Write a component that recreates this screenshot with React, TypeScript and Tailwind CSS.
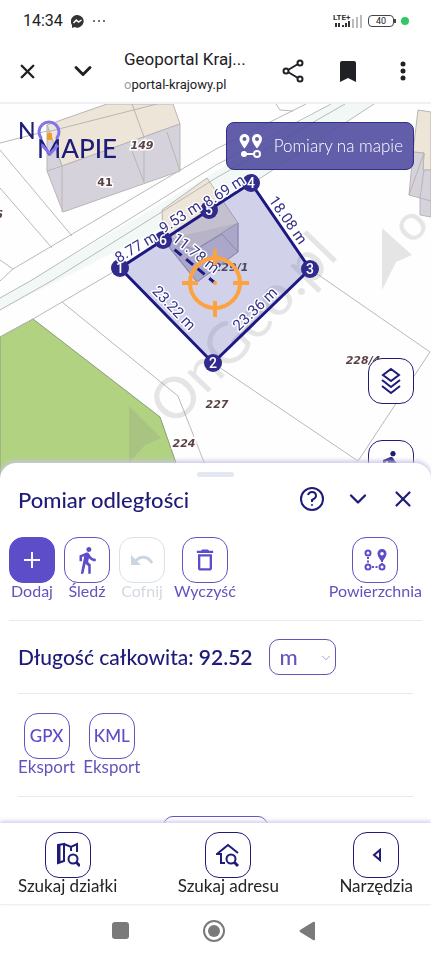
import type { ReactNode } from 'react';
import { ChevronDown, X } from 'lucide-react';
import { MdDirectionsWalk, MdOutlineDelete } from 'react-icons/md';

const parcelPoints = [
    { n: 6, x: 163, y: 240 },
    { n: 5, x: 209, y: 210 },
    { n: 4, x: 251, y: 183 },
    { n: 3, x: 310, y: 269 },
    { n: 2, x: 213, y: 363 },
    { n: 1, x: 120, y: 268 },
];

const distances = [
    { text: '8.77 m', x: 136, y: 247, angle: -31 },
    { text: '9.53 m', x: 180, y: 217, angle: -33 },
    { text: '8.69 m', x: 224, y: 191, angle: -33 },
    { text: '18.08 m', x: 288, y: 220, angle: 55 },
    { text: '23.36 m', x: 255, y: 309, angle: -44 },
    { text: '23.22 m', x: 174, y: 308, angle: 46 },
    { text: '11.78 m', x: 196, y: 253, angle: 38 },
];

const parcelNumbers = [
    { text: '149', x: 142, y: 149, italic: true },
    { text: '41', x: 105, y: 186, italic: false },
    { text: '227', x: 217, y: 408, italic: true },
    { text: '224', x: 184, y: 447, italic: true },
    { text: '228/4', x: 363, y: 364, italic: true },
    { text: '6', x: -1, y: 218, italic: true },
];

function MapCanvas() {
    return (
        <svg viewBox="0 104 431 376" preserveAspectRatio="xMidYMin slice" className="absolute inset-0 h-full w-full" role="img" aria-label="Mapa działek">
            <rect y="104" width="431" height="376" fill="#fefefe" />
            <path d="M0 298L331 104H374L259 179L0 310Z" fill="#f2f8f6" />
            <path d="M0 337L33 319L160 417L182 480H0Z" fill="#b1d281" stroke="#8c9c78" />

            {/* buildings */}
            <g stroke="#b9b5b5">
                <path d="M47 125L107 104H173L180 124L62 166Z" fill="#ede5d8" />
                <path d="M47 125L62 166L180 124V171L63 212L47 171Z" fill="#d6d2dc" />
                <path d="M132 104L144 137V182L132 151M167 132L180 171M47 171L62 166V212" fill="none" />
                <path d="M47 132L157 104" fill="none" />
                <path d="M418 110L431 112V170H423L424 153L413 152Z" fill="#ede5d8" />
                <path d="M413 152L424 153L423 170H431V217L420 215V198L409 195Z" fill="#d6d2dc" />
                <path d="M409 195L424 153M420 198L424 170M420 198L431 201" fill="none" />
                <path d="M162 210L207 178L238 223L195 250L163 238Z" fill="#ede5d8" />
                <path d="M163 238L195 250L238 223V252L197 282Z" fill="#d6d2dc" />
            </g>

            {/* parcel borders */}
            <g fill="none" stroke="#b9b9b7" strokeWidth="1">
                <path d="M0 143L47 131" />
                <path d="M0 150L72 236M0 188L52 248M0 260L13 269L0 281" />
                <path d="M13 269L216 149L306 104M276 104L280 110L293 111" />
                <path d="M0 298L32 280L216 165L331 104" />
                <path d="M0 310L53 280L216 178L345 104" />
                <path d="M0 337L33 319L120 268M259 179L374 104" />
                <path d="M62 302L178 396L211 480" />
                <path d="M310 269L430 352L358 461L213 363" />
            </g>

            {/* watermark */}
            <g fill="#8d8d8d" opacity="0.22">
                <text transform="translate(174 428) rotate(-46)" fontSize="57" className="font-['Lato',sans-serif]">OnGeo.pl</text>
                <path d="M129 406L161 438L145 445L129 463Z" />
                <path d="M382 228L412 255L396 262L382 290Z" />
                <text transform="translate(412 246) rotate(-46)" fontSize="50" className="font-['Lato',sans-serif]">o</text>
            </g>

            {/* measured area */}
            <polygon points={parcelPoints.map(p => `${p.x},${p.y}`).join(' ')} fill="#6b69b8" fillOpacity="0.3" stroke="#1d1983" strokeWidth="3" />
            <path d="M163 240L197 282L238 252V223M222 234L238 252M195 250L222 234" fill="#4b478f" fillOpacity="0.1" stroke="#8a87ad" />
            <path d="M163 240L215 283" stroke="#1d1983" strokeWidth="3" strokeDasharray="9 6" />

            <g fontWeight="700" fontSize="11" fill="#5a4244" stroke="#fff" strokeWidth="3" paintOrder="stroke" textAnchor="middle" className="font-['DejaVu_Sans',sans-serif]">
                {parcelNumbers.map(p => (
                    <text key={p.text} x={p.x} y={p.y} fontStyle={p.italic ? 'italic' : 'normal'}>{p.text}</text>
                ))}
            </g>
            <text x="231" y="271" fontSize="11" fontWeight="700" fontStyle="italic" fill="#4c4768" textAnchor="middle" className="font-['DejaVu_Sans',sans-serif]">229/1</text>

            {parcelPoints.map(p => (
                <g key={p.n}>
                    <circle cx={p.x} cy={p.y} r="9" fill="#2f2a8c" />
                    <text x={p.x} y={p.y + 5} fontSize="14" fontWeight="500" fill="#fff" textAnchor="middle" className="font-['Roboto',sans-serif]">{p.n}</text>
                </g>
            ))}

            <g fontSize="15" fill="#35318a" stroke="#fff" strokeWidth="3" strokeLinejoin="round" paintOrder="stroke" textAnchor="middle" className="font-['Roboto',sans-serif]">
                {distances.map(d => (
                    <text key={d.text} transform={`translate(${d.x} ${d.y}) rotate(${d.angle})`} y="5">{d.text}</text>
                ))}
            </g>

            {/* crosshair */}
            <g fill="none" stroke="#fda23c" strokeWidth="4">
                <circle cx="215" cy="283" r="25" />
                <path d="M182 283h16M233 283h16M215 249v16M215 301v16" />
                <circle cx="215" cy="283" r="2" fill="#fda23c" stroke="none" />
            </g>
        </svg>
    );
}

function Logo() {
    return (
        <svg width="108" height="46" viewBox="0 0 108 46" role="img" aria-label="Na mapie" className="absolute left-[17px] top-[14px]">
            <g fontWeight="500" fill="#1f1b78" className="font-['Lato',sans-serif]">
                <text x="1" y="21" fontSize="23">N</text>
                <text x="20" y="40" fontSize="26">MAPIE</text>
            </g>
            <path d="M24 20A10 10 0 1 1 40 20" fill="none" stroke="#8273e8" strokeWidth="3" strokeLinecap="round" />
            <path d="M25 27L33 36L41 27" fill="none" stroke="#8273e8" strokeWidth="3" />
            <rect x="30" y="15" width="5" height="7" rx="1" fill="#f59a23" />
        </svg>
    );
}

function PinsIcon() {
    return (
        <svg width="26" height="26" viewBox="0 0 26 26" className="shrink-0">
            <path fillRule="evenodd" fill="currentColor" d="M6.500 1a5 5 0 0 0-5 5c0 3.500 5 9.500 5 9.500s5-6 5-9.500a5 5 0 0 0-5-5zm0 3a2 2 0 1 1 0 4 2 2 0 0 1 0-4zM19 1a5 5 0 0 0-5 5c0 3.500 5 9.500 5 9.500s5-6 5-9.500a5 5 0 0 0-5-5zm0 3a2 2 0 1 1 0 4 2 2 0 0 1 0-4z" />
            <path d="M6 21H16" stroke="currentColor" strokeWidth="2" />
            <circle cx="6" cy="21" r="3" fill="currentColor" />
            <circle cx="19" cy="21" r="3" fill="none" stroke="currentColor" strokeWidth="2" />
        </svg>
    );
}

function LayersIcon() {
    return (
        <svg width="24" height="28" viewBox="0 0 24 28" fill="none" stroke="currentColor" strokeWidth="2">
            <path d="M12 2L20 8L12 14L4 8Z" />
            <path d="M3 13L12 20L21 13M3 19L12 26L21 19" />
        </svg>
    );
}

function AreaIcon() {
    return (
        <svg width="24" height="24" viewBox="0 0 24 24" fill="none" stroke="currentColor" strokeWidth="2">
            <circle cx="5" cy="5" r="2.500" />
            <circle cx="5" cy="19" r="2.500" />
            <circle cx="19" cy="19" r="2.500" />
            <path d="M5 9V16M9 19H16" strokeDasharray="2 1.500" />
            <path fillRule="evenodd" fill="currentColor" stroke="none" d="M19 1a4.500 4.500 0 0 0-4.500 4.500C14.500 9 19 14 19 14s4.500-5 4.500-8.500A4.500 4.500 0 0 0 19 1zm0 3a1.800 1.800 0 1 1 0 3.600A1.800 1.800 0 0 1 19 4z" />
            <path d="M19 13V16" strokeDasharray="1 1" />
        </svg>
    );
}

function UndoIcon() {
    return (
        <svg width="24" height="24" viewBox="0 0 24 24" fill="none" stroke="currentColor">
            <path d="M5 14C10 7 18 8 22 15" strokeWidth="3" />
            <path d="M1 7V17H11Z" fill="currentColor" stroke="none" />
        </svg>
    );
}

function MapSearchIcon() {
    return (
        <svg width="24" height="26" viewBox="0 0 24 26" fill="none" stroke="currentColor" strokeWidth="2">
            <path d="M2 3L8 2V19L2 21ZM8 2L15 5L21 2V10M15 5V9" />
            <path d="M3 3V20" strokeWidth="3" />
            <circle cx="17" cy="17" r="4.500" />
            <path d="M20 20L24 24" strokeWidth="3" />
        </svg>
    );
}

function HomeSearchIcon() {
    return (
        <svg width="24" height="26" viewBox="0 0 24 26" fill="none" stroke="currentColor" strokeWidth="2">
            <path d="M9 21H5V12H1L12 3L22 11" />
            <circle cx="15" cy="17" r="4.500" />
            <path d="M18 20L22 24" strokeWidth="3" />
        </svg>
    );
}

type ToolProps = { label: string; children: ReactNode; tone?: 'solid' | 'outline' | 'muted' | 'navy'; large?: boolean };

const textTones = { solid: 'text-[#6254bd]', outline: 'text-[#6254bd]', muted: 'text-[#d3d9e0]', navy: 'text-[#242424]' };
const boxTones = {
    solid: 'border-[#5d4dc9] bg-[#5d4dc9] text-white',
    outline: 'border-[#6254bd] text-[#5d4dc9]',
    muted: 'border-[#dbe1e6] text-[#ccd6e2]',
    navy: 'border-[#1f1b78] text-[#1f1b78]',
};

function Tool({ label, children, tone = 'outline', large }: ToolProps) {
    return (
        <button type="button" disabled={tone === 'muted'} className={`flex flex-col items-center ${large ? 'text-[17px]' : 'text-base'} ${textTones[tone]}`}>
            <span className={`flex h-[46px] w-[46px] items-center justify-center rounded-[14px] border ${boxTones[tone]}`}>{children}</span>
            <span className="leading-4">{label}</span>
        </button>
    );
}

function PhoneHeader() {
    return (
        <header className="shrink-0 border-b-2 border-[#eef0f2] font-['Roboto',sans-serif] text-[#202124]">
            <div className="flex h-[42px] items-center pl-[23px] pr-[22px]">
                <span className="text-base">14:34</span>
                <svg width="13" height="13" viewBox="0 0 13 13" className="ml-2">
                    <path d="M6.500 0a6.300 6.300 0 1 1-3 11.900L1 13V10A6.400 6.400 0 0 1 6.500 0z" fill="#333" />
                    <path d="M2.500 8L5.300 5L7.500 7L10.500 5" fill="none" stroke="#fff" strokeWidth="1.500" />
                </svg>
                <svg width="14" height="4" viewBox="0 0 14 4" fill="#444" className="ml-2">
                    <circle cx="2" cy="2" r="1" /><circle cx="7" cy="2" r="1" /><circle cx="12" cy="2" r="1" />
                </svg>
                <svg width="31" height="16" viewBox="0 0 31 16" className="ml-auto">
                    <text x="0" y="7" fontSize="8" fontWeight="700" fill="#333">LTE+</text>
                    <path d="M3 10v4M6 10v4" stroke="#333" strokeWidth="2" />
                    <path d="M10 12v2M13 10v4M16 8v6" stroke="#333" strokeWidth="2" />
                    <path d="M20 6v9M24 4v11M28 2v13" stroke="#bbb" strokeWidth="2" />
                </svg>
                <span className="ml-1 flex h-3 w-[26px] items-center justify-center rounded border border-[#444] text-[9px] leading-3">40</span>
                <span className="h-1 w-[2px] bg-[#444]" />
                <span className="ml-[5px] h-2 w-2 rounded-full bg-[#2fc864]" />
            </div>
            <div className="flex h-[60px] items-center pb-0.5 pl-4 pr-[23px]">
                <button type="button" aria-label="Zamknij kartę"><X size={23} strokeWidth={2.5} /></button>
                <button type="button" aria-label="Zwiń" className="ml-[30px]"><ChevronDown size={28} strokeWidth={2.5} /></button>
                <div className="ml-[27px] min-w-0 flex-1">
                    <p className="truncate text-[17px] leading-6">Geoportal Kraj...</p>
                    <p className="truncate pt-1 text-[13px] leading-5"><span className="text-gray-400">o</span>portal-krajowy.pl</p>
                </div>
                <div className="flex shrink-0 items-center">
                    <button type="button" aria-label="Udostępnij">
                        <svg width="22" height="24" viewBox="0 0 22 24" fill="none" stroke="currentColor" strokeWidth="2">
                            <path d="M6 11L16 5M6 13L16 19" />
                            <circle cx="4" cy="12" r="2.500" /><circle cx="18" cy="4" r="2.500" /><circle cx="18" cy="20" r="2.500" />
                        </svg>
                    </button>
                    <button type="button" aria-label="Zakładka" className="ml-9">
                        <svg width="16" height="21" viewBox="0 0 16 21" fill="currentColor"><path d="M2 0H14Q16 0 16 2V21L8 17L0 21V2Q0 0 2 0Z" /></svg>
                    </button>
                    <button type="button" aria-label="Więcej" className="ml-[42px]">
                        <svg width="10" height="20" viewBox="0 0 10 20" fill="currentColor">
                            <circle cx="5" cy="3" r="2.500" /><circle cx="5" cy="10" r="2.500" /><circle cx="5" cy="17" r="2.500" />
                        </svg>
                    </button>
                </div>
            </div>
        </header>
    );
}

export default function App() {
    return (
        <div className="flex h-screen flex-col overflow-hidden bg-white font-['Lato','Open_Sans',sans-serif]">
            <PhoneHeader />

            <main className="flex min-h-0 flex-1 flex-col">
                <section className="relative -mb-4 min-h-0 flex-1 overflow-hidden">
                    <MapCanvas />
                    <Logo />
                    <button type="button" className="absolute right-[17px] top-[18px] flex h-12 items-center gap-[10px] rounded-lg border border-[#332e8a] bg-[#514da0]/90 pl-[11px] pr-[10px] text-[17px] font-light text-white">
                        <PinsIcon />
                        Pomiary na mapie
                    </button>
                    <button type="button" aria-label="Warstwy" className="absolute right-[17px] top-[254px] flex h-[46px] w-[46px] items-center justify-center rounded-[14px] border border-[#1f1b78] bg-white text-[#1f1b78]">
                        <LayersIcon />
                    </button>
                    <button type="button" aria-label="Widok ulicy" className="absolute right-[17px] top-[336px] flex h-[46px] w-[46px] items-start justify-center rounded-[14px] border border-[#1f1b78] bg-white pt-2 text-[#1f1b78]">
                        <MdDirectionsWalk size={32} />
                    </button>
                </section>

                <section className="relative max-h-[360px] shrink-0 overflow-hidden rounded-t-2xl bg-white px-[9px] pt-[9px] shadow-[0_-2px_5px_#c9c5e6]">
                    <div className="mx-auto h-[5px] w-[37px] rounded bg-[#e2e8f0]" />
                    <div className="flex h-11 items-center pl-[9px] text-[#1f1b78]">
                        <h1 className="flex-1 text-[22px] font-medium">Pomiar odległości</h1>
                        <button type="button" aria-label="Pomoc">
                            <svg width="24" height="24" viewBox="0 0 24 24" fill="none" stroke="currentColor" strokeWidth="2">
                                <circle cx="12" cy="12" r="11" />
                                <path d="M8 8Q9 5 12 5Q16 5 16 9Q16 11 12 13V15" />
                                <circle cx="12" cy="18" r="1" fill="currentColor" stroke="none" />
                            </svg>
                        </button>
                        <button type="button" aria-label="Zwiń panel" className="ml-5"><ChevronDown size={28} /></button>
                        <button type="button" aria-label="Zamknij panel" className="ml-[18px] mr-1.5"><X size={26} /></button>
                    </div>

                    <div className="flex gap-[9px] border-b border-[#e5eaee] pb-[21px] pt-4">
                        <Tool label="Dodaj" tone="solid">
                            <svg width="18" height="18" viewBox="0 0 18 18" stroke="currentColor" strokeWidth="2"><path d="M9 1V17M1 9H17" /></svg>
                        </Tool>
                        <Tool label="Śledź"><MdDirectionsWalk size={30} /></Tool>
                        <Tool label="Cofnij" tone="muted"><UndoIcon /></Tool>
                        <Tool label="Wyczyść"><MdOutlineDelete size={28} /></Tool>
                        <div className="ml-auto"><Tool label="Powierzchnia"><AreaIcon /></Tool></div>
                    </div>

                    <div className="mx-[9px] flex items-center border-b border-[#e5eaee] py-[18px]">
                        <label htmlFor="unit" className="text-[21px] font-medium text-[#1f1b78]">Długość całkowita: <span className="font-semibold">92.52</span></label>
                        <div className="relative ml-4">
                            <select id="unit" defaultValue="m" className="h-9 w-[67px] appearance-none rounded-[10px] border border-[#6254bd] bg-white pl-[10px] text-[22px] font-medium leading-8 text-[#6254bd]">
                                <option value="m">m</option>
                                <option value="km">km</option>
                            </select>
                            <ChevronDown size={14} strokeWidth={1} className="pointer-events-none absolute right-[3px] top-3 text-[#6254bd]" />
                        </div>
                    </div>

                    <div className="mx-[9px] flex gap-2 border-b border-[#e5eaee] pb-[21px] pt-[19px]">
                        <Tool label="Eksport" large><span className="font-medium">GPX</span></Tool>
                        <Tool label="Eksport" large><span className="font-medium">KML</span></Tool>
                    </div>

                    <button type="button" className="mx-auto mt-[19px] block h-9 w-[105px] rounded-[10px] border border-[#6254bd] text-[#6254bd]" aria-label="Zapisz" />
                </section>
            </main>

            <nav className="relative flex shrink-0 justify-between border-b border-[#f0f0f2] bg-white px-[18px] pb-[10px] pt-[9px] shadow-[0_-2px_4px_#d3cff0]">
                <Tool label="Szukaj działki" tone="navy" large><MapSearchIcon /></Tool>
                <Tool label="Szukaj adresu" tone="navy" large><HomeSearchIcon /></Tool>
                <Tool label="Narzędzia" tone="navy" large>
                    <svg width="12" height="16" viewBox="0 0 12 16" fill="none" stroke="currentColor" strokeWidth="2"><path d="M10 3V13L4 8Z" /></svg>
                </Tool>
            </nav>

            <footer className="flex h-[55px] shrink-0 items-center justify-center gap-[74px] pb-1 pr-1 text-[#7a7a7a]">
                <button type="button" aria-label="Ostatnie" className="h-[17px] w-[17px] rounded-[3px] bg-current" />
                <button type="button" aria-label="Ekran główny" className="flex h-[22px] w-[22px] items-center justify-center rounded-full border-2 border-current">
                    <span className="h-3 w-3 rounded-full bg-current" />
                </button>
                <button type="button" aria-label="Wstecz">
                    <svg width="16" height="20" viewBox="0 0 16 20" fill="currentColor"><path d="M14 1Q16 0 16 2V18Q16 20 14 19L1 11Q0 10 1 9Z" /></svg>
                </button>
            </footer>
        </div>
    );
}
